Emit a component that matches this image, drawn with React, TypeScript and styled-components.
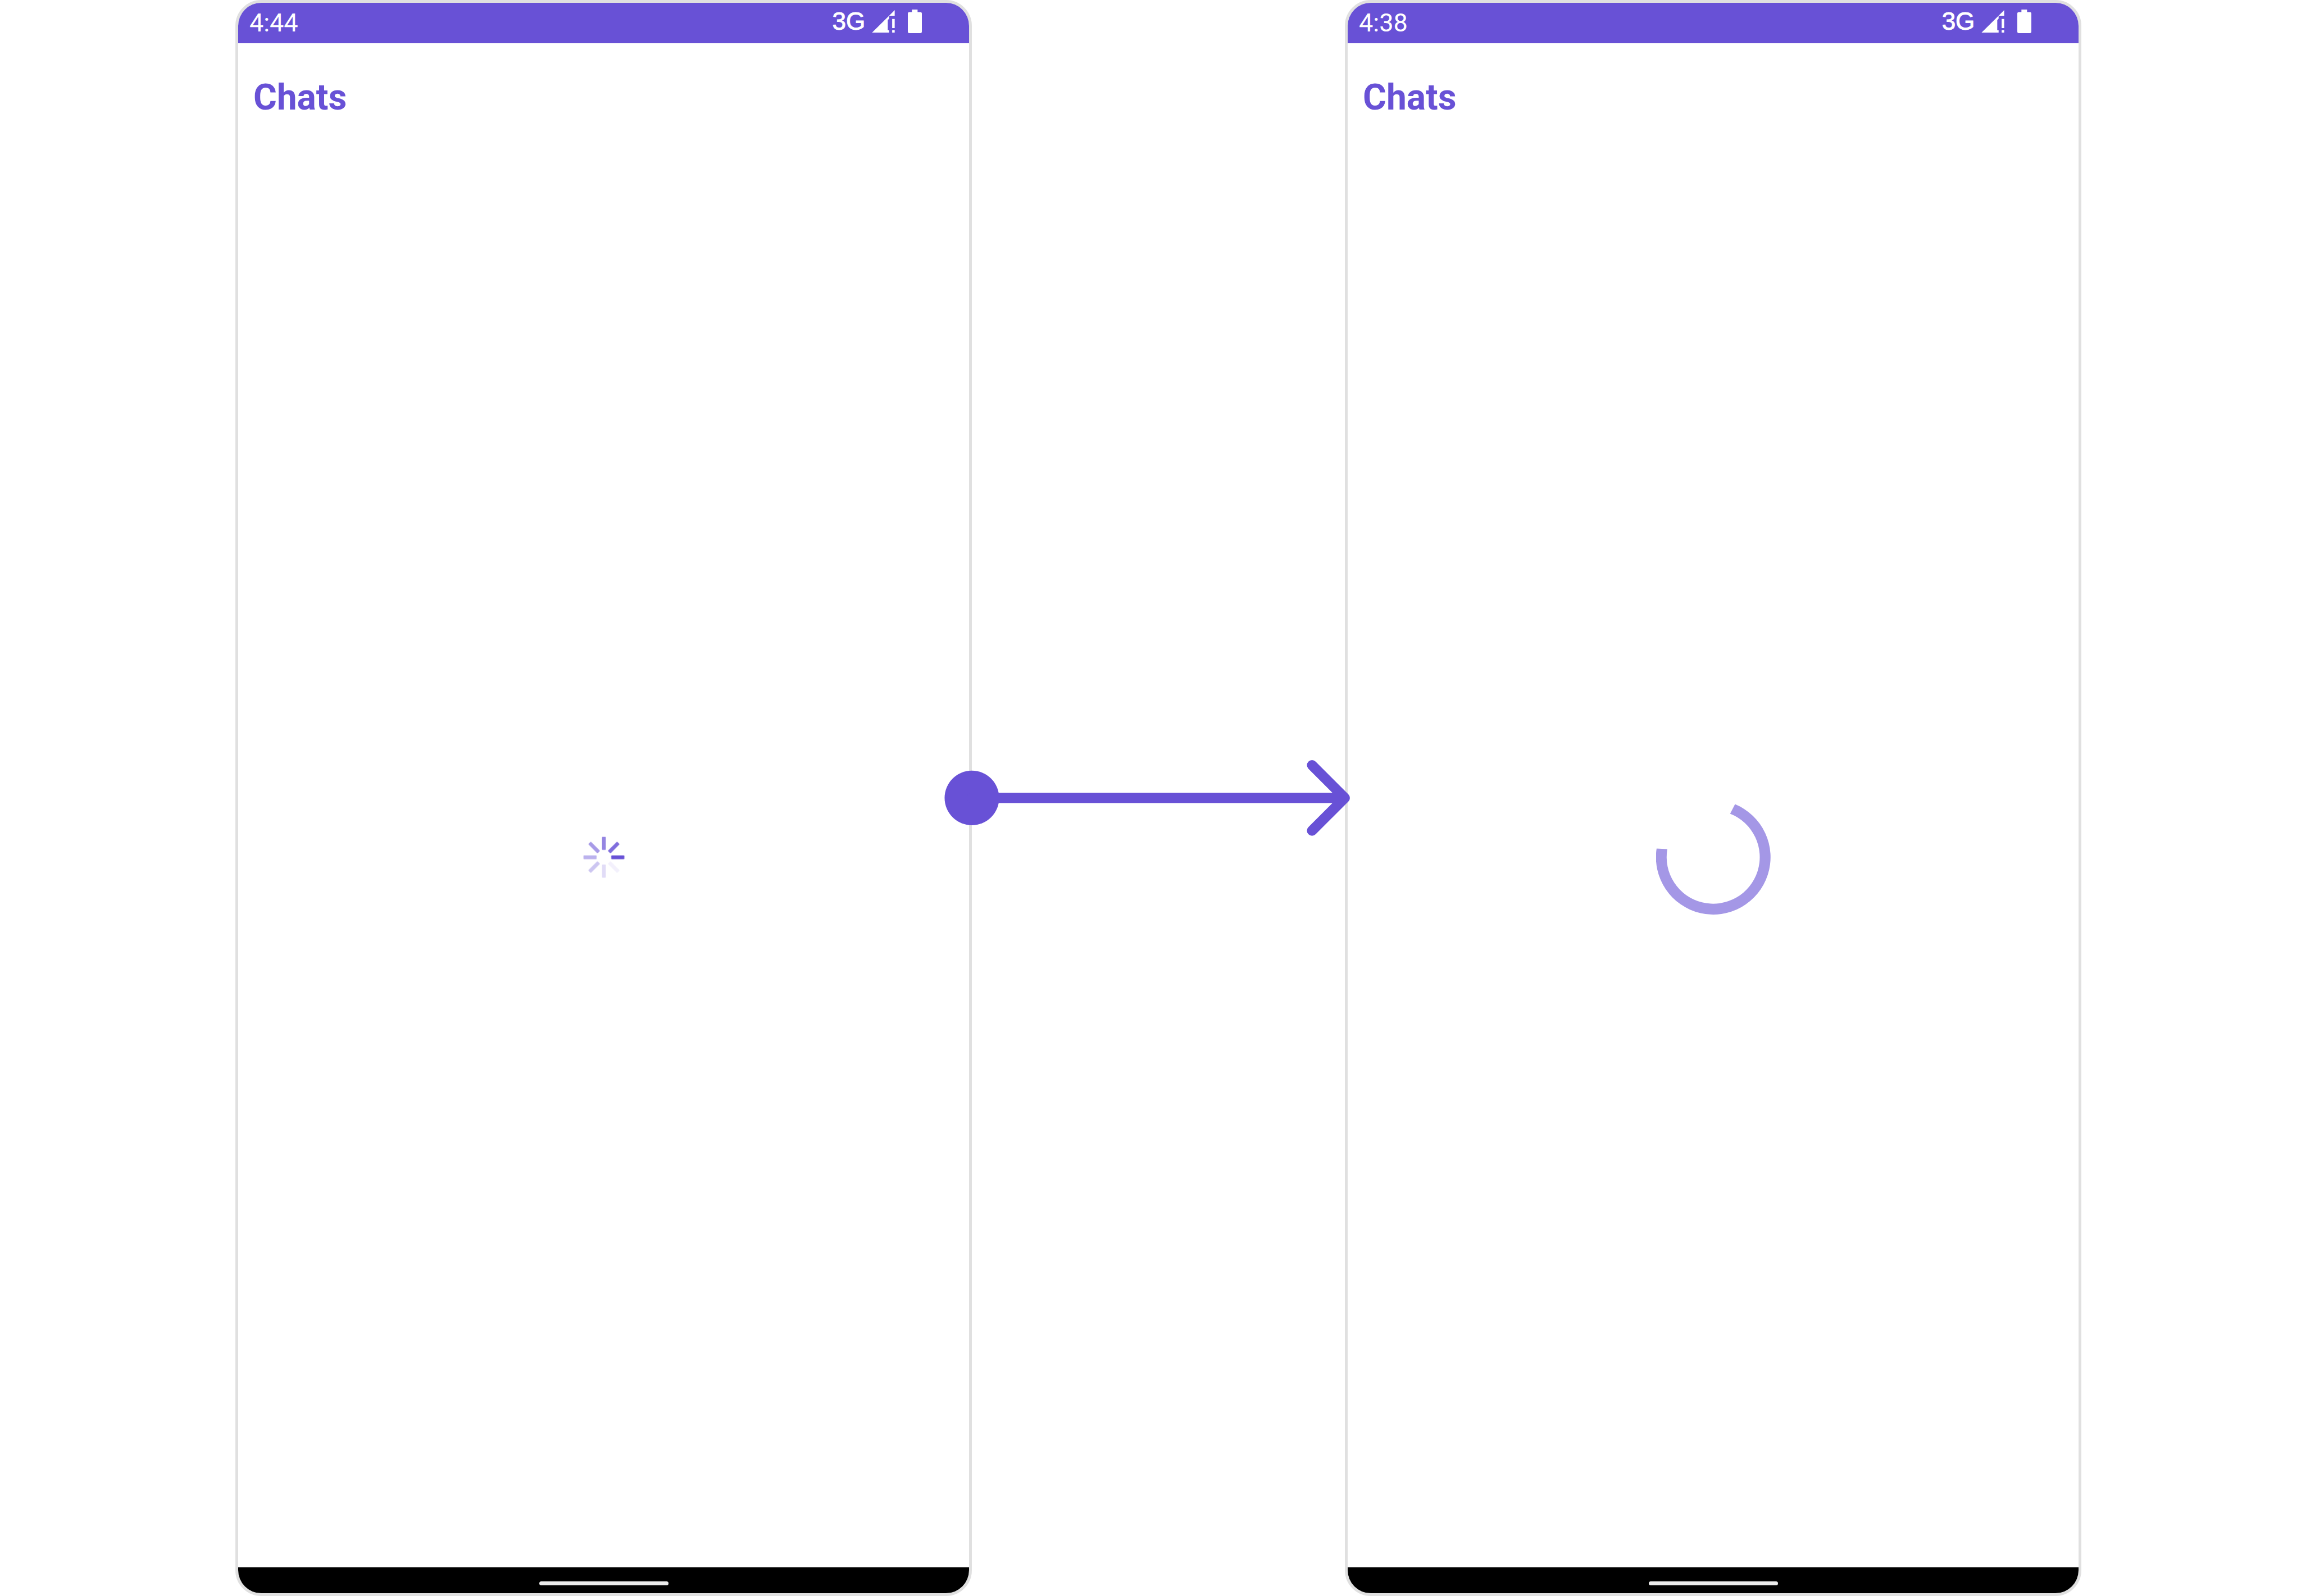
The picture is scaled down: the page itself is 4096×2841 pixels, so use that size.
import React from "react";
import styled, { createGlobalStyle } from "styled-components";

const ACCENT = "#6851d6";

const GlobalStyle = createGlobalStyle`
  *, *::before, *::after { box-sizing: border-box; }
  body {
    margin: 0;
    background: #fff;
    font-family: Roboto, "Liberation Sans", sans-serif;
  }
`;

const Board = styled.main`
  display: grid;
  grid-template-columns: 460fr 1440fr 729fr 1440fr 429fr;
  min-height: 100vh;
  overflow: hidden;
`;

const Phone = styled.section<{ $column: number }>`
  grid-column: ${(p) => p.$column};
  display: flex;
  flex-direction: column;
  min-width: 0;
  border: 5px solid #e0e0e0;
  border-radius: 46px;
  background: #fff;
  overflow: hidden;
`;

const StatusBar = styled.div`
  display: flex;
  align-items: center;
  justify-content: space-between;
  height: 72px;
  padding: 0 84px 0 20px;
  background: ${ACCENT};
  color: #fff;
`;

const Clock = styled.time`
  font-size: 45px;
  line-height: 52px;
`;

const StatusIcons = styled.div`
  display: flex;
  align-items: center;
  padding-bottom: 6px;
`;

const Network = styled.span`
  margin-right: 12px;
  font-family: "Liberation Sans", sans-serif;
  font-size: 44px;
  line-height: 52px;
  -webkit-text-stroke: 1px #fff;
`;

const SignalIcon = styled.svg`
  width: 41px;
  height: 40px;
  margin-right: 23px;
`;

const BatteryIcon = styled.svg`
  width: 25px;
  height: 42px;
`;

const Header = styled.header`
  display: flex;
  align-items: center;
  height: 184px;
  padding: 10px 27px 0;
`;

const Title = styled.h1`
  margin: 0;
  color: ${ACCENT};
  font-size: 64px;
  font-weight: 700;
  line-height: 76px;
`;

const Content = styled.div`
  flex: 1;
  display: flex;
  align-items: center;
  justify-content: center;
`;

const Spokes = styled.svg`
  width: 80px;
  height: 80px;
`;

const Ring = styled.svg`
  width: 204px;
  height: 204px;
`;

const NavBar = styled.div`
  display: flex;
  align-items: flex-end;
  justify-content: center;
  height: 46px;
  padding-bottom: 14px;
  background: #000;
`;

const HomeHandle = styled.div`
  width: 230px;
  height: 7px;
  border-radius: 4px;
  background: #ebebeb;
`;

const Connector = styled.svg`
  grid-column: 3;
  align-self: center;
  position: relative;
  z-index: 1;
  width: 100%;
  overflow: visible;
`;

const SPOKE_OPACITY = [1, 0.08, 0.2, 0.33, 0.45, 0.58, 0.7, 0.84];

function SpokeLoader() {
  return (
    <Spokes viewBox="-132 -132 264 264" role="img" aria-label="Loading">
      <filter id="soft" x="-20%" y="-20%" width="140%" height="140%">
        <feGaussianBlur stdDeviation="2" />
      </filter>
      <g filter="url(#soft)">
        {SPOKE_OPACITY.map((opacity, i) => (
          <rect
            key={i}
            x="43"
            y="-11"
            width="77"
            height="22"
            rx="4"
            fill={ACCENT}
            opacity={opacity}
            transform={`rotate(${i * 45})`}
          />
        ))}
      </g>
    </Spokes>
  );
}

function RingLoader() {
  return (
    <Ring viewBox="81 41 672 672" role="img" aria-label="Loading">
      <path
        d="M544 66A336 336 0 1 1 84 326L147 329A273 273 0 1 0 515 122Z"
        fill="#a497e6"
      />
    </Ring>
  );
}

function PhoneScreen({
  column,
  time,
  children,
}: {
  column: number;
  time: string;
  children: React.ReactNode;
}) {
  return (
    <Phone $column={column}>
      <StatusBar>
        <Clock>{time}</Clock>
        <StatusIcons>
          <Network>3G</Network>
          <SignalIcon viewBox="316 59 134 133" fill="#fff" aria-hidden="true">
            <path d="M316 192L417 92V110L409 118V178H417V192Z" />
            <path d="M450 59V92H417Z" />
            <path d="M435 111H450V165H435ZM435 177H450V192H435Z" />
          </SignalIcon>
          <BatteryIcon viewBox="525 57 82 138" fill="#fff" aria-hidden="true">
            <path d="M549 57H582V72H598Q607 72 607 81V186Q607 195 598 195H534Q525 195 525 186V81Q525 72 534 72H549Z" />
          </BatteryIcon>
        </StatusIcons>
      </StatusBar>
      <Header>
        <Title>Chats</Title>
      </Header>
      <Content>{children}</Content>
      <NavBar>
        <HomeHandle />
      </NavBar>
    </Phone>
  );
}

export default function App() {
  return (
    <>
      <GlobalStyle />
      <Board>
        <PhoneScreen column={2} time="4:44">
          <SpokeLoader />
        </PhoneScreen>
        <Connector viewBox="0 0 729 148" aria-hidden="true">
          <circle cx="0" cy="74" r="53.3" fill={ACCENT} />
          <path
            d="M0 74H729M665 10L729 74L665 138"
            fill="none"
            stroke={ACCENT}
            strokeWidth="20"
            strokeLinecap="round"
            strokeLinejoin="round"
          />
        </Connector>
        <PhoneScreen column={4} time="4:38">
          <RingLoader />
        </PhoneScreen>
      </Board>
    </>
  );
}
